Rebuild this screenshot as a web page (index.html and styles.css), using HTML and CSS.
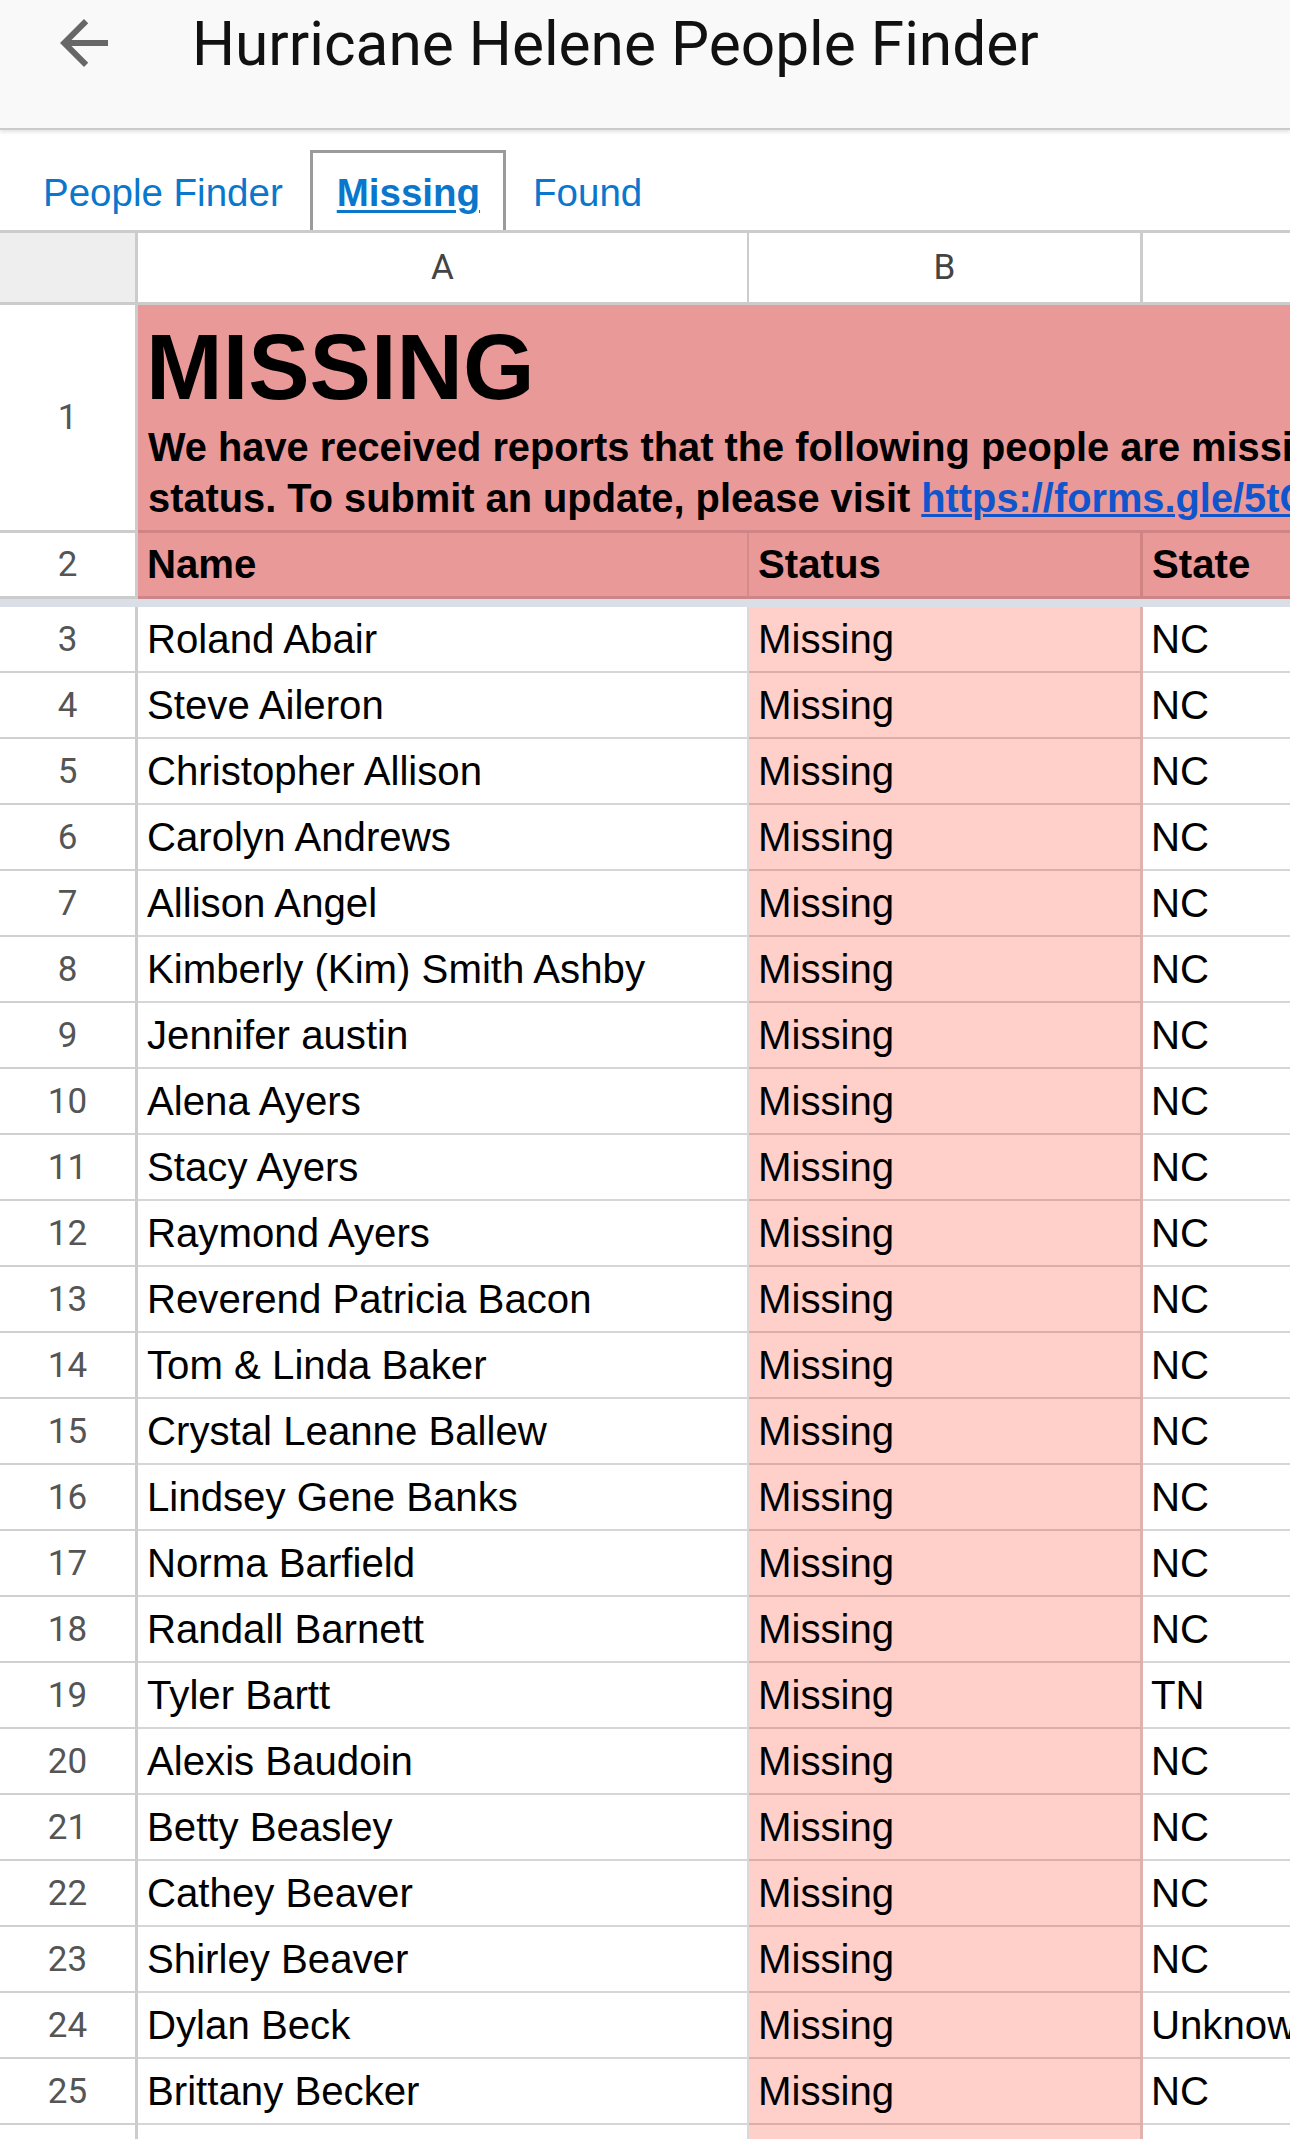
FILE: index.html
```html
<!DOCTYPE html>
<html lang="en">
<head>
<meta charset="utf-8">
<title>Hurricane Helene People Finder</title>
<link rel="stylesheet" href="styles.css">
</head>
<body>
<header class="appbar">
  <svg class="back" viewBox="0 0 24 24" aria-hidden="true"><path d="M20 11H7.83l5.59-5.59L12 4l-8 8 8 8 1.41-1.41L7.83 13H20v-2z"/></svg>
  <h1 class="title">Hurricane Helene People Finder</h1>
</header>
<nav class="tabs">
  <div class="tab">People Finder</div>
  <div class="tab active">Missing</div>
  <div class="tab">Found</div>
</nav>
<main class="sheet">
  <div class="row colhead">
    <div class="cell num corner"></div>
    <div class="cell a">A</div>
    <div class="cell b">B</div>
    <div class="cell c"></div>
  </div>
  <div class="row r1">
    <div class="cell num">1</div>
    <div class="cell merged">
      <div class="big">MISSING</div>
      <div class="intro">
        <div class="line">We have received reports that the following people are missing or their current whereabouts are unknown, and their</div>
        <div class="line">status. To submit an update, please visit <a class="link" href="#">https://forms.gle/5tCe7pUnPjL8Jq2K8</a></div>
      </div>
    </div>
  </div>
  <div class="row r2">
    <div class="cell num">2</div>
    <div class="cell a">Name</div>
    <div class="cell b">Status</div>
    <div class="cell c">State</div>
  </div>
  <div class="freeze"></div>
  <div class="row data"><div class="cell num">3</div><div class="cell a">Roland Abair</div><div class="cell b">Missing</div><div class="cell c">NC</div></div>
  <div class="row data"><div class="cell num">4</div><div class="cell a">Steve Aileron</div><div class="cell b">Missing</div><div class="cell c">NC</div></div>
  <div class="row data"><div class="cell num">5</div><div class="cell a">Christopher Allison</div><div class="cell b">Missing</div><div class="cell c">NC</div></div>
  <div class="row data"><div class="cell num">6</div><div class="cell a">Carolyn Andrews</div><div class="cell b">Missing</div><div class="cell c">NC</div></div>
  <div class="row data"><div class="cell num">7</div><div class="cell a">Allison Angel</div><div class="cell b">Missing</div><div class="cell c">NC</div></div>
  <div class="row data"><div class="cell num">8</div><div class="cell a">Kimberly (Kim) Smith Ashby</div><div class="cell b">Missing</div><div class="cell c">NC</div></div>
  <div class="row data"><div class="cell num">9</div><div class="cell a">Jennifer austin</div><div class="cell b">Missing</div><div class="cell c">NC</div></div>
  <div class="row data"><div class="cell num">10</div><div class="cell a">Alena Ayers</div><div class="cell b">Missing</div><div class="cell c">NC</div></div>
  <div class="row data"><div class="cell num">11</div><div class="cell a">Stacy Ayers</div><div class="cell b">Missing</div><div class="cell c">NC</div></div>
  <div class="row data"><div class="cell num">12</div><div class="cell a">Raymond Ayers</div><div class="cell b">Missing</div><div class="cell c">NC</div></div>
  <div class="row data"><div class="cell num">13</div><div class="cell a">Reverend Patricia Bacon</div><div class="cell b">Missing</div><div class="cell c">NC</div></div>
  <div class="row data"><div class="cell num">14</div><div class="cell a">Tom &amp; Linda Baker</div><div class="cell b">Missing</div><div class="cell c">NC</div></div>
  <div class="row data"><div class="cell num">15</div><div class="cell a">Crystal Leanne Ballew</div><div class="cell b">Missing</div><div class="cell c">NC</div></div>
  <div class="row data"><div class="cell num">16</div><div class="cell a">Lindsey Gene Banks</div><div class="cell b">Missing</div><div class="cell c">NC</div></div>
  <div class="row data"><div class="cell num">17</div><div class="cell a">Norma Barfield</div><div class="cell b">Missing</div><div class="cell c">NC</div></div>
  <div class="row data"><div class="cell num">18</div><div class="cell a">Randall Barnett</div><div class="cell b">Missing</div><div class="cell c">NC</div></div>
  <div class="row data"><div class="cell num">19</div><div class="cell a">Tyler Bartt</div><div class="cell b">Missing</div><div class="cell c">TN</div></div>
  <div class="row data"><div class="cell num">20</div><div class="cell a">Alexis Baudoin</div><div class="cell b">Missing</div><div class="cell c">NC</div></div>
  <div class="row data"><div class="cell num">21</div><div class="cell a">Betty Beasley</div><div class="cell b">Missing</div><div class="cell c">NC</div></div>
  <div class="row data"><div class="cell num">22</div><div class="cell a">Cathey Beaver</div><div class="cell b">Missing</div><div class="cell c">NC</div></div>
  <div class="row data"><div class="cell num">23</div><div class="cell a">Shirley Beaver</div><div class="cell b">Missing</div><div class="cell c">NC</div></div>
  <div class="row data"><div class="cell num">24</div><div class="cell a">Dylan Beck</div><div class="cell b">Missing</div><div class="cell c">Unknown</div></div>
  <div class="row data"><div class="cell num">25</div><div class="cell a">Brittany Becker</div><div class="cell b">Missing</div><div class="cell c">NC</div></div>
  <div class="row data"><div class="cell num"></div><div class="cell a"></div><div class="cell b"></div><div class="cell c"></div></div>
</main>
</body>
</html>
```

FILE: styles.css
```css
* { box-sizing: border-box; }
html, body { margin: 0; padding: 0; }
body {
  width: 1290px;
  height: 2139px;
  overflow: hidden;
  background: #fff;
  color: #000;
  font-family: "Liberation Sans", Arial, sans-serif;
}

/* App bar */
.appbar {
  position: relative;
  z-index: 1;
  height: 130px;
  display: flex;
  align-items: flex-start;
  padding-top: 7px;
  background: #f9f9f9;
  border-bottom: 2px solid #cbcbcb;
  box-shadow: 0 2px 4px rgba(0, 0, 0, 0.12);
}
.back {
  flex: none;
  width: 72px;
  height: 72px;
  margin-left: 48px;
  fill: #676767;
}
.title {
  margin: 2px 0 0 72px;
  font-family: Roboto, "Liberation Sans", sans-serif;
  font-size: 60.4px;
  font-weight: 400;
  line-height: 72px;
  color: #111;
  white-space: nowrap;
}

/* Sheet tabs */
.tabs {
  height: 100px;
  display: flex;
  align-items: flex-end;
  padding-left: 16px;
}
.tab {
  height: 80px;
  padding: 18px 24px 0;
  border: 3px solid transparent;
  border-bottom: 0;
  font-size: 38.5px;
  line-height: 43px;
  color: #0a77cc;
  white-space: nowrap;
}
.tab.active {
  padding-right: 23px;
  border-color: #9b9b9b;
  font-weight: bold;
  text-decoration: underline;
  text-decoration-thickness: 3px;
  text-underline-offset: 4px;
}

/* Grid */
.sheet {
  border-top: 3px solid #cccccc;
}
.row {
  display: grid;
  grid-template-columns: 138px 611px 394px 1fr;
}
.cell {
  white-space: nowrap;
  overflow: hidden;
  font-size: 40.2px;
}
.num {
  border-right: 3px solid #cccccc;
  font-family: Roboto, "Liberation Sans", sans-serif;
  font-size: 35px;
  color: #555;
  text-align: center;
}

/* Column letters */
.colhead {
  height: 72px;
  border-bottom: 3px solid #cccccc;
}
.colhead .cell {
  font-family: Roboto, "Liberation Sans", sans-serif;
  font-size: 35px;
  line-height: 69px;
  text-align: center;
  color: #444;
}
.colhead .corner { background: #eeeeee; }
.colhead .a { border-right: 2px solid #cccccc; }
.colhead .b { border-right: 3px solid #cccccc; }

/* Row 1: merged title cell */
.r1 { height: 228px; }
.r1 .num {
  display: flex;
  align-items: center;
  justify-content: center;
  border-bottom: 3px solid #cccccc;
}
.merged {
  grid-column: 2 / -1;
  padding: 12px 0 0 10px;
  background: #ea9999;
  border-bottom: 3px solid #cf8585;
  font-weight: bold;
}
.big {
  margin-left: -2px;
  font-size: 92px;
  line-height: 100px;
}
.intro {
  margin-top: 5px;
  font-size: 39.8px;
  line-height: 50.5px;
}
.link {
  color: #1155cc;
  text-decoration: underline;
  text-decoration-thickness: 3px;
}

/* Row 2: column titles */
.r2 { height: 66px; }
.r2 .cell {
  line-height: 63px;
  font-weight: bold;
  padding-left: 9px;
  background: #ea9999;
  border-bottom: 3px solid #cf8585;
}
.r2 .num {
  padding-left: 0;
  font-weight: 400;
  background: #fff;
  border-bottom-color: #cccccc;
}
.r2 .a { border-right: 2px solid #d38b8b; }
.r2 .b { border-right: 3px solid #cf8383; }

/* Frozen divider */
.freeze {
  height: 8px;
  background: #dadfe7;
}

/* Data rows */
.data { height: 66px; }
.data .cell {
  padding-top: 2px;
  line-height: 62px;
  padding-left: 9px;
  border-bottom: 2px solid #d6d6d6;
}
.data .num {
  padding-left: 0;
  border-bottom-color: #d0d0d0;
}
.data .a { border-right: 2px solid #d9d9d9; }
.data .b {
  background: #ffcfc9;
  border-right: 3px solid #e0b1ad;
  border-bottom-color: #dcaeaa;
}
.data .c { padding-left: 8px; }
```
